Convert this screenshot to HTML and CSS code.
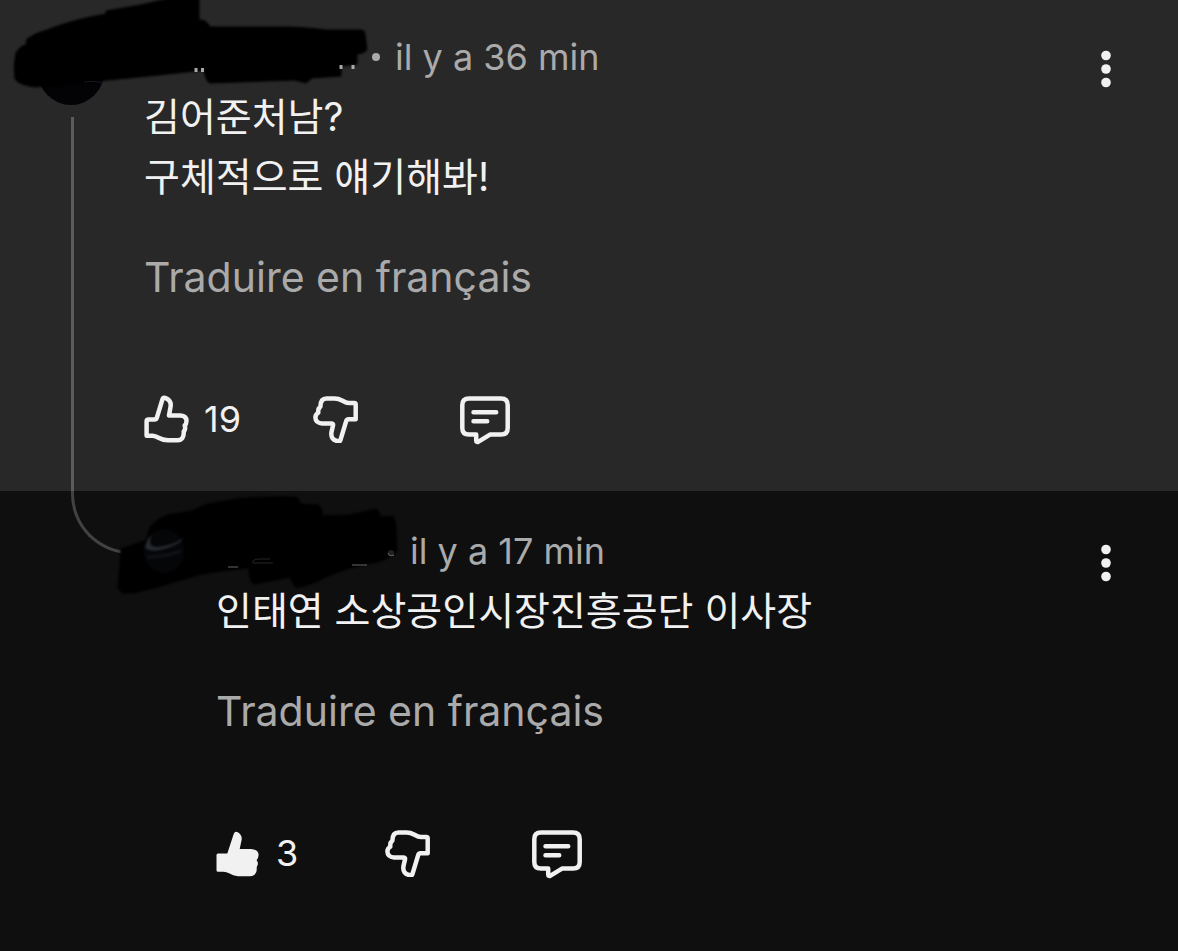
FILE: index.html
```html
<!DOCTYPE html>
<html lang="fr">
<head>
<meta charset="utf-8">
<meta name="viewport" content="width=device-width, initial-scale=1">
<title>Commentaires</title>
<link rel="stylesheet" href="styles.css">
</head>
<body>
<svg class="symbols" aria-hidden="true">
  <symbol id="like" viewBox="0 0 48 48">
    <path d="M4.500 24.500H10.500Q12.200 24.500 12.800 22.800L18.500 4.200Q19.200 2.200 21.200 2.900Q27.600 5.300 26.600 11.500L25 20.500H36.500Q42.600 21 42.500 26Q42.400 29 40.700 30.500Q42 34 39.700 36.500Q40.300 45 33.500 45.300H24Q18.500 45 14.500 42.700Q11.500 41 8.500 40.800H2.600V26.400Q2.600 24.500 4.500 24.500Z"/>
  </symbol>
  <symbol id="dislike" viewBox="0 0 48 48">
    <path d="M42.300 8H36.800Q34.500 8 30.500 5.700Q26.500 3.500 22.500 3.500H14.500Q8.500 3.500 8.400 11.500Q5.700 13.800 6.300 17.600Q3.400 19.500 3.400 22.500Q3.600 28 10 28.400H19.200Q21.500 28.400 21 30.500L19.500 37Q18.200 45 26.300 46.300Q28 46.600 28.500 44.800L34.100 26.300Q34.700 24.300 36.500 24.300H43.700V9.500Q43.700 8 42.300 8Z"/>
  </symbol>
  <symbol id="reply" viewBox="0 -2 52 52">
    <path d="M9 3.500H41Q47.700 3.500 47.700 10V33Q47.700 39.600 41 39.600H30L18.500 46.600Q16.200 47.600 16.200 45.500V39.600H9Q2.300 39.600 2.300 33V10Q2.300 3.500 9 3.500ZM13.500 17.200H36.200M13.500 26.200H27.200"/>
  </symbol>
  <symbol id="more" viewBox="0 0 12 38">
    <circle cx="6" cy="5.500" r="4.800"/><circle cx="6" cy="19" r="4.800"/><circle cx="6" cy="32.500" r="4.800"/>
  </symbol>
</svg>
<main class="thread">
  <article class="comment comment-parent">
    <svg class="mask" width="400" height="120" viewBox="0 0 400 120" aria-hidden="true">
      <circle cx="71" cy="72" r="33" fill="#030306"/>
      <path class="ink" d="M27 39Q35 33 47 30Q75 19 106 14V11Q140 6 176 -3H199V20Q206 19 210 27H290Q312 28 325 30H361Q365 30 365 34L367 50Q363 54 357 54V64L341 66V76L312 78L306 83L294 80L210 83Q206 82 204 70Q160 75 108 80L80 83L35 87Q19 85 15 79Q13 65 16 53Q21 45 26 45Z"/>
      <path d="M196 68v4M202.500 68v4M341 65v4M353 65v4" stroke="#aaa" stroke-width="3"/>
      <path d="M84 82q10-2 19 1" stroke="#181822" stroke-width="1" fill="none"/>
    </svg>
    <div class="body">
      <header class="meta"><span class="author"></span><span class="dot"></span><time>il y a 36 min</time></header>
      <p class="text" lang="ko">김어준처남?<br>구체적으로 얘기해봐!</p>
      <button class="translate" type="button">Traduire en français</button>
      <div class="actions">
        <button class="action" type="button" aria-label="J'aime"><svg class="icon"><use href="#like"/></svg><span>19</span></button>
        <button class="action" type="button" aria-label="Je n'aime pas"><svg class="icon"><use href="#dislike"/></svg></button>
        <button class="action" type="button" aria-label="Répondre"><svg class="icon icon-reply"><use href="#reply"/></svg></button>
      </div>
    </div>
    <button class="menu" type="button" aria-label="Plus d'options"><svg class="more"><use href="#more"/></svg></button>
  </article>
  <article class="comment comment-reply">
    <svg class="mask" width="420" height="120" viewBox="0 491 420 120" aria-hidden="true">
      <path class="ink" d="M148 534Q149 522 168 515L192 511Q206 503 225 501Q250 496 296 497Q300 499 300 504L318 505Q323 508 322 516L350 515L377 509L381 517L393 516Q396 520 396 535L397 551Q390 558 377 562L350 568Q330 574 318 581Q302 588 295 587L290 577L254 584Q249 582 249 568Q215 571 198 575L150 589Q135 594 122 593L118 587L120 565L121 549L147 540Z"/>
      <g class="glint">
        <ellipse cx="164" cy="551" rx="20" ry="22" fill="#050608"/>
        <path d="M145 548Q147 538 152 535Q146 547 158 547Q172 546 183 538Q180 545 160 550Q150 552 145 548Z" fill="#262a30"/>
        <path d="M147 557q18 0 34-6" fill="none" stroke="#101318" stroke-width="3"/>
      </g>
      <path d="M228 567h10M352 565h15" stroke="#666" stroke-width="1"/>
      <path d="M252 563q1-4 6-4h12M253 563h20" fill="none" stroke="#242424" stroke-width="1"/>
      <circle cx="391" cy="553" r="3" fill="#222"/><path d="M388 553q1 4 6 2" fill="none" stroke="#666" stroke-width="1"/>
    </svg>
    <div class="body">
      <header class="meta"><span class="author"></span><span class="dot"></span><time>il y a 17 min</time></header>
      <p class="text" lang="ko">인태연 소상공인시장진흥공단 이사장</p>
      <button class="translate" type="button">Traduire en français</button>
      <div class="actions">
        <button class="action" type="button" aria-label="J'aime" aria-pressed="true"><svg class="icon icon-filled" viewBox="0 0 48 48"><path d="M2 24.500H11.300L17.700 5Q19 1.500 22.200 3.400Q27 6.500 25.300 12.500L23.700 20H35Q42.600 20.500 42.600 26Q42.500 29 40.600 31.300Q43.200 34 40.700 38Q41.500 46.800 34 47.200H22Q17 46.500 13 44.200Q10.500 42.700 7.500 42.700H2Q.500 42.700 .500 41.200V26Q.500 24.500 2 24.500Z"/></svg><span>3</span></button>
        <button class="action" type="button" aria-label="Je n'aime pas"><svg class="icon"><use href="#dislike"/></svg></button>
        <button class="action" type="button" aria-label="Répondre"><svg class="icon icon-reply"><use href="#reply"/></svg></button>
      </div>
    </div>
    <button class="menu" type="button" aria-label="Plus d'options"><svg class="more"><use href="#more"/></svg></button>
  </article>
</main>
</body>
</html>
```
FILE: styles.css
```css
* { box-sizing: border-box; }

body {
  margin: 0;
  background: #0f0f0f;
  color: #f1f1f1;
  font-family: Inter, "Noto Sans CJK KR", sans-serif;
}

button {
  margin: 0;
  padding: 0;
  border: 0;
  background: none;
  color: inherit;
  font: inherit;
  text-align: left;
  cursor: pointer;
}

.symbols {
  position: absolute;
  width: 0;
  height: 0;
}

.comment {
  position: relative;
  display: flex;
  align-items: flex-start;
  padding-right: 52px;
}

.comment-parent {
  padding-top: 37px;
  padding-bottom: 46px;
  padding-left: 144px;
  background: #282828;
}

.comment-reply {
  padding-top: 40px;
  padding-bottom: 60px;
  padding-left: 216px;
}

/* Line joining the parent comment to its reply */
.comment-parent::before {
  content: "";
  position: absolute;
  top: 117px;
  bottom: 0;
  left: 71px;
  width: 3px;
  background: #5b5b5b;
}

.comment-reply::before {
  content: "";
  position: absolute;
  top: 0;
  left: 71px;
  width: 60px;
  height: 60px;
  border-bottom: 3px solid #424242;
  border-left: 3px solid #424242;
  border-bottom-left-radius: 60px;
}

.mask {
  position: absolute;
  top: 0;
  left: 0;
  pointer-events: none;
}

.ink {
  fill: #000;
  stroke: #000;
  stroke-width: 1;
  stroke-linejoin: round;
  filter: blur(1px);
}

.glint { filter: blur(1px); }

.body {
  flex: 1;
  min-width: 0;
}

.meta {
  display: flex;
  align-items: center;
  height: 40px;
  color: #aaa;
  font-size: 36px;
  line-height: 40px;
}

.author { width: 228px; }
.comment-reply .author { width: 171px; }

.dot {
  width: 8px;
  height: 8px;
  margin-right: 15px;
  border-radius: 50%;
  background: #aaa;
}

.comment-reply .dot { visibility: hidden; }

.text {
  margin: 10px 0 50px;
  font-size: 39px;
  line-height: 60px;
}

.translate {
  display: block;
  color: #aaa;
  font-size: 41px;
  line-height: 40px;
}

.actions {
  display: grid;
  grid-template-columns: 168px 148px 52px;
  margin-top: 96px;
}

.action {
  display: flex;
  align-items: center;
  gap: 12px;
  height: 52px;
  font-size: 36px;
  line-height: 48px;
}

.icon {
  display: block;
  flex: none;
  width: 48px;
  height: 48px;
  fill: none;
  stroke: #f1f1f1;
  stroke-width: 4.5;
  stroke-linecap: round;
  stroke-linejoin: round;
}

.icon-reply {
  width: 52px;
  height: 52px;
}

.icon-filled {
  fill: #f1f1f1;
  stroke: none;
}

.menu {
  display: flex;
  justify-content: center;
  width: 40px;
  padding: 13px 0;
}

.more {
  width: 12px;
  height: 38px;
  fill: #f1f1f1;
}
```
